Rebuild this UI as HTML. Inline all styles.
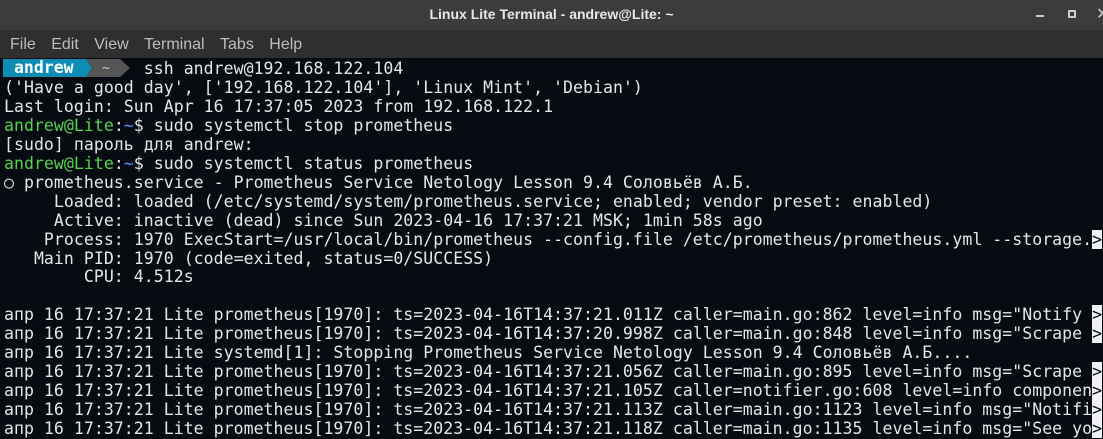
<!DOCTYPE html>
<html><head><meta charset="utf-8"><style>
body{margin:0;width:1103px;height:437px;overflow:hidden;background:#060b12;font-family:"Liberation Sans",sans-serif}
#title{position:absolute;left:0;top:0;width:1103px;height:30px;background:#3c3c3c;color:#e8e8e8;font-weight:bold;font-size:14px;text-align:center;line-height:28px}
#menu{position:absolute;left:0;top:30px;width:1103px;height:28px;background:#2f2f2f;color:#bdbdbd;font-size:16px;line-height:29px}
#menu span{margin-left:10px;margin-right:1px}
#term{position:absolute;left:4px;top:60px;font-family:"DejaVu Sans Mono","Liberation Mono",monospace;font-size:16.55px;letter-spacing:0.03px;line-height:18.95px;color:#e6e6e6;white-space:pre}
.g{color:#54d34e}.b{color:#5a8dff}.r{background:#f0f0f0;color:#060b12}
</style></head><body>
<div id="title">Linux Lite Terminal - andrew@Lite: ~</div>
<div style="position:absolute;left:1036px;top:15px;width:8px;height:2px;background:#ccc"></div>
<div style="position:absolute;left:1068px;top:10px;width:4px;height:4px;border:2px solid #ccc"></div>
<div style="position:absolute;left:1096px;top:4px;color:#ccc;font-size:16px">✕</div>
<div id="menu"><span>File</span> <span>Edit</span> <span>View</span> <span>Terminal</span> <span>Tabs</span> <span>Help</span></div>
<svg style="position:absolute;left:0;top:59px" width="140" height="18"><polygon points="3,0 86,0 92,9 86,18 3,18" fill="#0d8db3"/><polygon points="86,0 120,0 130,9 120,18 86,18 92,9" fill="#555"/><text x="14" y="14" fill="#fff" font-family="DejaVu Sans Mono" font-weight="bold" font-size="16.5">andrew</text><text x="102" y="13" fill="#ccc" font-family="DejaVu Sans Mono" font-size="13">~</text></svg>
<div id="term">              ssh andrew@192.168.122.104
('Have a good day', ['192.168.122.104'], 'Linux Mint', 'Debian')
Last login: Sun Apr 16 17:37:05 2023 from 192.168.122.1
<span class="g">andrew@Lite</span>:<span class="b">~</span>$ sudo systemctl stop prometheus
[sudo] пароль для andrew:
<span class="g">andrew@Lite</span>:<span class="b">~</span>$ sudo systemctl status prometheus
○ prometheus.service - Prometheus Service Netology Lesson 9.4 Соловьёв А.Б.
     Loaded: loaded (/etc/systemd/system/prometheus.service; enabled; vendor preset: enabled)
     Active: inactive (dead) since Sun 2023-04-16 17:37:21 MSK; 1min 58s ago
    Process: 1970 ExecStart=/usr/local/bin/prometheus --config.file /etc/prometheus/prometheus.yml --storage.<span class="r">&gt;</span>
   Main PID: 1970 (code=exited, status=0/SUCCESS)
        CPU: 4.512s

апр 16 17:37:21 Lite prometheus[1970]: ts=2023-04-16T14:37:21.011Z caller=main.go:862 level=info msg="Notify <span class="r">&gt;</span>
апр 16 17:37:21 Lite prometheus[1970]: ts=2023-04-16T14:37:20.998Z caller=main.go:848 level=info msg="Scrape <span class="r">&gt;</span>
апр 16 17:37:21 Lite systemd[1]: Stopping Prometheus Service Netology Lesson 9.4 Соловьёв А.Б....
апр 16 17:37:21 Lite prometheus[1970]: ts=2023-04-16T14:37:21.056Z caller=main.go:895 level=info msg="Scrape <span class="r">&gt;</span>
апр 16 17:37:21 Lite prometheus[1970]: ts=2023-04-16T14:37:21.105Z caller=notifier.go:608 level=info componen<span class="r">&gt;</span>
апр 16 17:37:21 Lite prometheus[1970]: ts=2023-04-16T14:37:21.113Z caller=main.go:1123 level=info msg="Notifi<span class="r">&gt;</span>
апр 16 17:37:21 Lite prometheus[1970]: ts=2023-04-16T14:37:21.118Z caller=main.go:1135 level=info msg="See yo<span class="r">&gt;</span></div>
</body></html>
